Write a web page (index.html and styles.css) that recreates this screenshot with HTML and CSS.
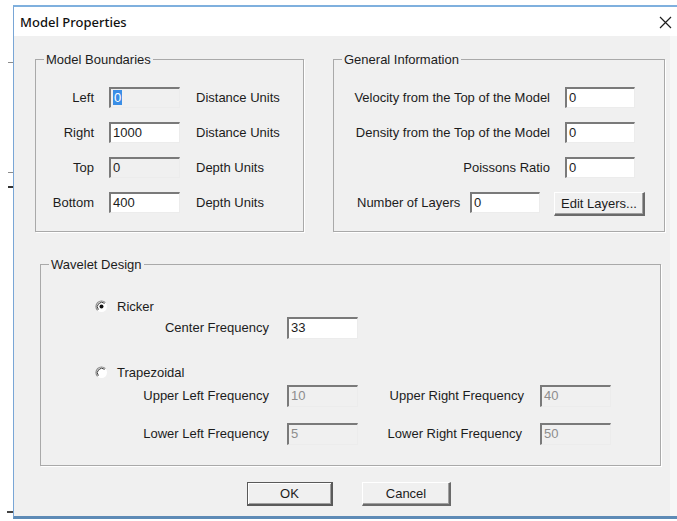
FILE: index.html
```html
<!DOCTYPE html>
<html lang="en">
<head>
<meta charset="utf-8">
<title>Model Properties</title>
<link rel="stylesheet" href="styles.css">
</head>
<body>
<div class="screen">
  <div class="desk-edge">
    <span class="tick t1"></span>
    <span class="tick t2"></span>
    <span class="tick t3"></span>
    <span class="tick t4"></span>
  </div>
  <div class="window">
    <div class="titlebar">
      <span class="title">Model Properties</span>
      <svg class="close" width="13" height="13" viewBox="0 0 13 13" aria-label="Close">
        <path d="M1 1 L12 12 M12 1 L1 12" stroke="#1e1e1e" stroke-width="1.2" fill="none"/>
      </svg>
    </div>
    <div class="client">
      <div class="top-row">
        <fieldset class="group bounds">
          <legend>Model Boundaries</legend>
          <div class="bounds-grid">
            <label class="lbl">Left</label>
            <div class="edit readonly"><span class="sel">0</span></div>
            <span class="unit">Distance Units</span>

            <label class="lbl">Right</label>
            <div class="edit">1000</div>
            <span class="unit">Distance Units</span>

            <label class="lbl">Top</label>
            <div class="edit readonly">0</div>
            <span class="unit">Depth Units</span>

            <label class="lbl">Bottom</label>
            <div class="edit">400</div>
            <span class="unit">Depth Units</span>
          </div>
        </fieldset>

        <fieldset class="group general">
          <legend>General Information</legend>
          <div class="gi-row">
            <label class="lbl">Velocity from the Top of the Model</label>
            <div class="edit">0</div>
          </div>
          <div class="gi-row">
            <label class="lbl">Density from the Top of the Model</label>
            <div class="edit">0</div>
          </div>
          <div class="gi-row">
            <label class="lbl">Poissons Ratio</label>
            <div class="edit">0</div>
          </div>
          <div class="gi-row layers">
            <label class="lbl">Number of Layers</label>
            <div class="edit">0</div>
            <button class="btn edit-layers" type="button">Edit Layers...</button>
          </div>
        </fieldset>
      </div>

      <fieldset class="group wavelet">
        <legend>Wavelet Design</legend>
        <div class="radio-row ricker">
          <svg class="radio" width="13" height="13" viewBox="0 0 13 13">
            <circle cx="6.5" cy="6.5" r="5.5" fill="#ffffff"/>
            <path d="M2.6 10.4 A5.5 5.5 0 0 1 10.4 2.6" stroke="#8a8a8a" stroke-width="1.2" fill="none"/>
            <path d="M3.4 9.6 A4.4 4.4 0 0 1 9.6 3.4" stroke="#3c3c3c" stroke-width="1" fill="none"/>
            <circle cx="6.5" cy="6.5" r="2" fill="#111"/>
          </svg>
          <span>Ricker</span>
        </div>
        <div class="freq-grid center">
          <label class="lbl">Center Frequency</label>
          <div class="edit tall">33</div>
        </div>

        <div class="radio-row trap">
          <svg class="radio" width="13" height="13" viewBox="0 0 13 13">
            <circle cx="6.5" cy="6.5" r="5.5" fill="#ffffff"/>
            <path d="M2.6 10.4 A5.5 5.5 0 0 1 10.4 2.6" stroke="#8a8a8a" stroke-width="1.2" fill="none"/>
            <path d="M3.4 9.6 A4.4 4.4 0 0 1 9.6 3.4" stroke="#3c3c3c" stroke-width="1" fill="none"/>
          </svg>
          <span>Trapezoidal</span>
        </div>
        <div class="freq-grid trap-fields">
          <label class="lbl">Upper Left Frequency</label>
          <div class="edit tall disabled">10</div>
          <label class="lbl">Upper Right Frequency</label>
          <div class="edit tall disabled">40</div>

          <label class="lbl">Lower Left Frequency</label>
          <div class="edit tall disabled">5</div>
          <label class="lbl">Lower Right Frequency</label>
          <div class="edit tall disabled">50</div>
        </div>
      </fieldset>

      <div class="actions">
        <button class="btn default" type="button">OK</button>
        <button class="btn" type="button">Cancel</button>
      </div>
    </div>
  </div>
</div>
</body>
</html>
```
FILE: styles.css
```css
* { box-sizing: border-box; }

html, body {
  margin: 0;
  padding: 0;
  background: #ffffff;
}

body {
  font-family: "Liberation Sans", Arial, sans-serif;
  font-size: 13px;
  color: #1c1c1c;
  overflow: hidden;
}

.screen {
  display: flex;
  width: 677px;
  height: 521px;
}

/* strip of desktop showing to the left of the dialog */
.desk-edge {
  width: 13px;
  flex: none;
  display: flex;
  flex-direction: column;
  align-items: flex-end;
}

.tick {
  display: block;
  height: 1px;
  width: 5px;
  background: #8c8c8c;
}
.t1 { margin-top: 62px; }
.t2 { margin-top: 109px; }
.t3 { margin-top: 13px; height: 2px; background: #333; }
.t4 { margin-top: 323px; height: 2px; width: 6px; background: #444; }

/* dialog frame */
.window {
  flex: 1;
  margin-top: 5px;
  height: 514px;
  display: flex;
  flex-direction: column;
  border-left: 1px solid #79a6d6;
  border-top: 2px solid #7fb0de;
  border-bottom: 3px solid #5e8bb6;
  background: #f0f0f0;
}

.titlebar {
  height: 29px;
  flex: none;
  display: flex;
  align-items: center;
  justify-content: space-between;
  background: #ffffff;
  padding: 0 5px 0 6px;
}

.title {
  font-family: "Noto Sans", "Open Sans", sans-serif;
  font-size: 13px;
  font-weight: 500;
  color: #111111;
}

.close {
  margin-top: 1px;
}

.client {
  flex: 1;
  padding: 16px 0 0 21px;
  background: #f0f0f0;
  border-right: 7px solid #f6f6f6;
}

/* group boxes */
.group {
  margin: 0;
  padding: 0;
  border: 1px solid #a9a9a9;
  box-shadow: 1px 1px 0 #ffffff;
  min-width: 0;
}

.group legend {
  margin-left: 8px;
  padding: 0 2px;
  line-height: 15px;
  height: 15px;
  background: #f0f0f0;
}

.top-row {
  display: flex;
  align-items: stretch;
  gap: 29px;
}

.bounds { width: 269px; }
.general { width: 332px; }

.lbl {
  white-space: nowrap;
  line-height: 21px;
}

/* edit controls, sunken */
.edit {
  height: 21px;
  width: 71px;
  background: #ffffff;
  border-style: solid;
  border-width: 2px 1px 1px 2px;
  border-color: #7a7a7a #ececec #ececec #7a7a7a;
  padding: 1px 2px 0 2px;
  line-height: 15px;
  white-space: nowrap;
  overflow: hidden;
}
.edit.tall { height: 22px; }
.edit.readonly { background: #f0f0f0; }
.edit.disabled { background: #f0f0f0; color: #8d8d8d; }

.sel {
  background: #3a8ee6;
  color: #ffffff;
  padding: 0 1px;
}

.bounds-grid {
  display: grid;
  grid-template-columns: 48px 71px auto;
  grid-auto-rows: 21px;
  column-gap: 15px;
  row-gap: 14px;
  padding: 20px 0 18px 10px;
}
.bounds-grid .lbl { text-align: right; }
.bounds-grid .unit { line-height: 21px; margin-left: 1px; }

.general {
  padding: 20px 0 0 0;
  display: flex;
  flex-direction: column;
  gap: 14px;
}

.gi-row {
  display: flex;
  justify-content: flex-end;
  align-items: flex-start;
  gap: 15px;
  padding-right: 29px;
}
.gi-row .edit { width: 70px; }

.gi-row.layers {
  justify-content: flex-start;
  padding: 0 0 0 23px;
  gap: 0;
}
.layers .lbl { width: 100px; }
.layers .edit { margin-left: 13px; }
.layers .btn { margin-left: 14px; width: 91px; }

/* push buttons, raised */
.btn {
  font: inherit;
  color: #1c1c1c;
  height: 24px;
  padding: 0;
  background: #f0f0f0;
  border-style: solid;
  border-width: 1px 2px 2px 1px;
  border-color: #ffffff #6a6a6a #6a6a6a #ffffff;
  box-shadow: inset -1px -1px 0 #a0a0a0;
}

.btn.default {
  border-width: 1px 2px 2px 1px;
  border-color: #5a5a5a #5a5a5a #5a5a5a #5a5a5a;
  box-shadow: inset 1px 1px 0 #ffffff, inset -1px -1px 0 #a0a0a0;
}

/* wavelet design */
.wavelet {
  width: 621px;
  margin: 25px 0 0 5px;
  padding: 27px 0 20px 0;
}

.radio-row {
  display: flex;
  align-items: center;
  height: 15px;
  padding-left: 54px;
  gap: 9px;
}
.radio { flex: none; }

.freq-grid {
  display: grid;
  grid-template-columns: 246px 71px 182px 71px;
  row-gap: 16px;
}
.freq-grid .lbl {
  text-align: right;
  padding-right: 18px;
  line-height: 22px;
}
.freq-grid .lbl:nth-child(3) { padding-right: 16px; }

.freq-grid.center { margin-top: 3px; }
.radio-row.trap { margin-top: 26px; }
.freq-grid.trap-fields { margin-top: 5px; }

.actions {
  display: flex;
  gap: 29px;
  margin: 16px 0 0 212px;
}
.actions .btn:first-child { width: 86px; }
.actions .btn:last-child { width: 89px; }
```
